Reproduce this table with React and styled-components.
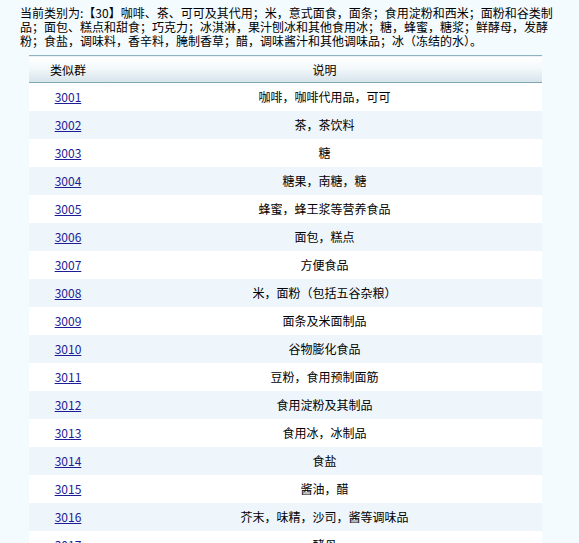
import React from "react";
import styled, { createGlobalStyle } from "styled-components";

const GlobalStyle = createGlobalStyle`
  html, body {
    margin: 0;
    padding: 0;
    background: #f4fbff;
  }
  body {
    font-family: "Noto Sans CJK SC", "Liberation Sans", sans-serif;
    font-size: 12px;
    color: #000;
  }
`;

const Page = styled.div`
  padding: 6px 0 20px 20px;
`;

const Intro = styled.p`
  margin: 0;
  line-height: 14px;
`;

const IntroLine = styled.span`
  display: block;
  white-space: nowrap;
`;

const Table = styled.table`
  margin: 7px 0 0 9px;
  width: 513px;
  border-collapse: collapse;
  background: #fff;
`;

const HeadCell = styled.th`
  height: 26px;
  padding: 0;
  font-weight: normal;
  text-align: center;
  width: ${(p) => p.$width || "auto"};
  border-top: 1px solid #8fb2bf;
  border-bottom: 1px solid #82a6b4;
  background: linear-gradient(to bottom, #ffffff 0%, #f3f8fb 45%, #d5e3ea 100%);
`;

const Row = styled.tr`
  height: 28px;
  background: ${(p) => (p.$alt ? "#eef5fb" : "#ffffff")};
`;

const Cell = styled.td`
  padding: 0;
  text-align: center;
`;

const Code = styled.a`
  color: #1c1c94;
  text-decoration: underline;
`;

const intro = [
  "当前类别为:【30】咖啡、茶、可可及其代用；米，意式面食，面条；食用淀粉和西米；面粉和谷类制",
  "品；面包、糕点和甜食；巧克力；冰淇淋，果汁刨冰和其他食用冰；糖，蜂蜜，糖浆；鲜酵母，发酵",
  "粉；食盐，调味料，香辛料，腌制香草；醋，调味酱汁和其他调味品；冰（冻结的水）。",
];

const groups = [
  ["3001", "咖啡，咖啡代用品，可可"],
  ["3002", "茶，茶饮料"],
  ["3003", "糖"],
  ["3004", "糖果，南糖，糖"],
  ["3005", "蜂蜜，蜂王浆等营养食品"],
  ["3006", "面包，糕点"],
  ["3007", "方便食品"],
  ["3008", "米，面粉（包括五谷杂粮）"],
  ["3009", "面条及米面制品"],
  ["3010", "谷物膨化食品"],
  ["3011", "豆粉，食用预制面筋"],
  ["3012", "食用淀粉及其制品"],
  ["3013", "食用冰，冰制品"],
  ["3014", "食盐"],
  ["3015", "酱油，醋"],
  ["3016", "芥末，味精，沙司，酱等调味品"],
  ["3017", "酵母"],
  ["3018", "食品用香料（不包括含芳香油的香料）"],
];

const App = () => {
  return (
    <Page>
      <GlobalStyle />
      <Intro>
        {intro.map((line) => (
          <IntroLine key={line}>{line}</IntroLine>
        ))}
      </Intro>
      <Table>
        <thead>
          <tr>
            <HeadCell $width="78px">类似群</HeadCell>
            <HeadCell>说明</HeadCell>
          </tr>
        </thead>
        <tbody>
          {groups.map(([code, desc], i) => (
            <Row key={code} $alt={i % 2 === 1}>
              <Cell>
                <Code href="#">{code}</Code>
              </Cell>
              <Cell>{desc}</Cell>
            </Row>
          ))}
        </tbody>
      </Table>
    </Page>
  );
};

export default App;
